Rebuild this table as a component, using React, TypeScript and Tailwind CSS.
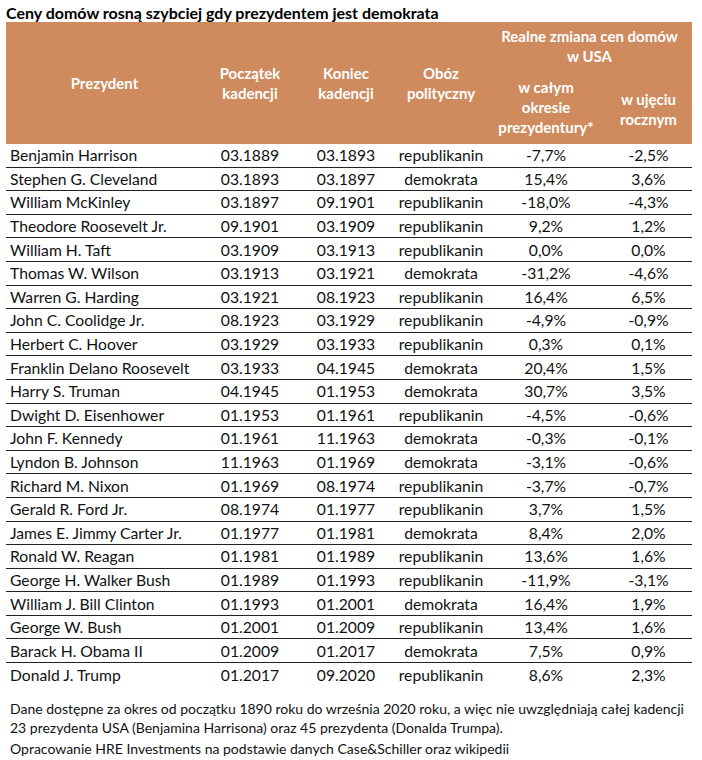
const rows: [string, string, string, string, string, string][] = [
  ["Benjamin Harrison", "03.1889", "03.1893", "republikanin", "-7,7%", "-2,5%"],
  ["Stephen G. Cleveland", "03.1893", "03.1897", "demokrata", "15,4%", "3,6%"],
  ["William McKinley", "03.1897", "09.1901", "republikanin", "-18,0%", "-4,3%"],
  ["Theodore Roosevelt Jr.", "09.1901", "03.1909", "republikanin", "9,2%", "1,2%"],
  ["William H. Taft", "03.1909", "03.1913", "republikanin", "0,0%", "0,0%"],
  ["Thomas W. Wilson", "03.1913", "03.1921", "demokrata", "-31,2%", "-4,6%"],
  ["Warren G. Harding", "03.1921", "08.1923", "republikanin", "16,4%", "6,5%"],
  ["John C. Coolidge Jr.", "08.1923", "03.1929", "republikanin", "-4,9%", "-0,9%"],
  ["Herbert C. Hoover", "03.1929", "03.1933", "republikanin", "0,3%", "0,1%"],
  ["Franklin Delano Roosevelt", "03.1933", "04.1945", "demokrata", "20,4%", "1,5%"],
  ["Harry S. Truman", "04.1945", "01.1953", "demokrata", "30,7%", "3,5%"],
  ["Dwight D. Eisenhower", "01.1953", "01.1961", "republikanin", "-4,5%", "-0,6%"],
  ["John F. Kennedy", "01.1961", "11.1963", "demokrata", "-0,3%", "-0,1%"],
  ["Lyndon B. Johnson", "11.1963", "01.1969", "demokrata", "-3,1%", "-0,6%"],
  ["Richard M. Nixon", "01.1969", "08.1974", "republikanin", "-3,7%", "-0,7%"],
  ["Gerald R. Ford Jr.", "08.1974", "01.1977", "republikanin", "3,7%", "1,5%"],
  ["James E. Jimmy Carter Jr.", "01.1977", "01.1981", "demokrata", "8,4%", "2,0%"],
  ["Ronald W. Reagan", "01.1981", "01.1989", "republikanin", "13,6%", "1,6%"],
  ["George H. Walker Bush", "01.1989", "01.1993", "republikanin", "-11,9%", "-3,1%"],
  ["William J. Bill Clinton", "01.1993", "01.2001", "demokrata", "16,4%", "1,9%"],
  ["George W. Bush", "01.2001", "01.2009", "republikanin", "13,4%", "1,6%"],
  ["Barack H. Obama II", "01.2009", "01.2017", "demokrata", "7,5%", "0,9%"],
  ["Donald J. Trump", "01.2017", "09.2020", "republikanin", "8,6%", "2,3%"],
];

const cols = "grid grid-cols-[197px_94px_98px_92px_118px_87px]";

export default function App() {
  return (
    <div className="w-[702px] h-[760px] bg-white text-[#111] font-['Lato','Liberation_Sans',sans-serif] pl-[6px] pt-[4px]">
      <h1 className="text-[16px] font-bold leading-[18px] h-[18px] text-black">
        Ceny domów rosną szybciej gdy prezydentem jest demokrata
      </h1>

      <div className={`${cols} grid-rows-[48px_74px] bg-[#cf8a5d] text-white font-bold text-[15px] leading-[20px] text-center w-[686px]`}>
        <div className="row-span-2 flex items-center justify-center">Prezydent</div>
        <div className="row-span-2 flex items-center justify-center">
          Początek
          <br />
          kadencji
        </div>
        <div className="row-span-2 flex items-center justify-center">
          Koniec
          <br />
          kadencji
        </div>
        <div className="row-span-2 flex items-center justify-center">
          Obóz
          <br />
          polityczny
        </div>
        <div className="col-span-2 flex items-end justify-center pb-[4px]">
          Realne zmiana cen domów
          <br />
          w USA
        </div>
        <div className="flex items-center justify-center">
          w całym
          <br />
          okresie
          <br />
          prezydentury*
        </div>
        <div className="flex items-center justify-center pt-[4px]">
          w ujęciu
          <br />
          rocznym
        </div>
      </div>

      <div className="w-[686px] text-[15.7px]">
        {rows.map((r, i) => (
          <div
            key={r[0]}
            className={`${cols} h-[23.6px] items-center leading-[18px] ${i < rows.length - 1 ? "border-b border-[#222]" : ""}`}
          >
            <div className="pl-[4px] whitespace-nowrap">{r[0]}</div>
            <div className="text-center">{r[1]}</div>
            <div className="text-center">{r[2]}</div>
            <div className="text-center">{r[3]}</div>
            <div className="text-center">{r[4]}</div>
            <div className="text-center">{r[5]}</div>
          </div>
        ))}
      </div>

      <div className="text-[14px] leading-[19px] mt-[12px] pl-[4px]">
        <p>
          Dane dostępne za okres od początku 1890 roku do września 2020 roku, a więc nie uwzględniają całej kadencji
          <br />
          23 prezydenta USA (Benjamina Harrisona) oraz 45 prezydenta (Donalda Trumpa).
        </p>
        <p className="mt-[2px]">Opracowanie HRE Investments na podstawie danych Case&amp;Schiller oraz wikipedii</p>
      </div>
    </div>
  );
}
